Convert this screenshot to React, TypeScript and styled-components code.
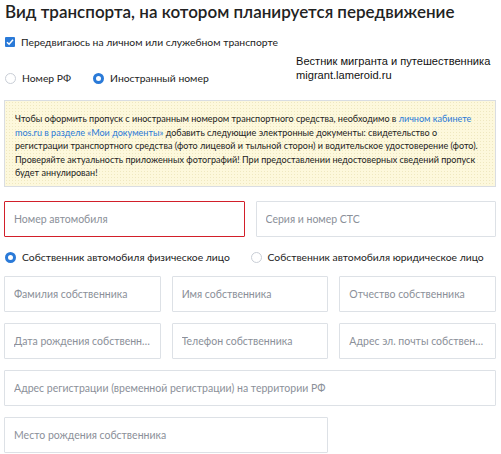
import React from "react";
import styled, { createGlobalStyle } from "styled-components";

const GlobalStyle = createGlobalStyle`
  body {
    margin: 0;
    background: #fff;
    font-family: Lato, "Noto Sans", sans-serif;
    color: #222;
  }
`;

const fields3a = ["Фамилия собственника", "Имя собственника", "Отчество собственника"];
const fields3b = [
  "Дата рождения собственника",
  "Телефон собственника",
  "Адрес эл. почты собственника",
];

const App = () => {
  return (
    <Page>
      <GlobalStyle />
      <Title>Вид транспорта, на котором планируется передвижение</Title>

      <OptionRow $top={10}>
        <Option>
          <CheckBox>
            <svg width="8" height="8" viewBox="0 0 8 8">
              <path d="M1 4.2 L3.1 6.2 L7 1.8" fill="none" stroke="#fff" strokeWidth="1.5" />
            </svg>
          </CheckBox>
          Передвигаюсь на личном или служебном транспорте
        </Option>
      </OptionRow>

      <OptionRow $top={20} $gap={22}>
        <Option>
          <Radio />
          Номер РФ
        </Option>
        <Option>
          <Radio $checked />
          Иностранный номер
        </Option>
      </OptionRow>

      <Watermark>
        Вестник мигранта и путешественника
        <br />
        migrant.lameroid.ru
      </Watermark>

      <Notice>
        Чтобы оформить пропуск с иностранным номером транспортного средства, необходимо в{" "}
        <Link>личном кабинете mos.ru в разделе «Мои документы»</Link> добавить следующие
        электронные документы: свидетельство о регистрации транспортного средства (фото
        лицевой и тыльной сторон) и водительское удостоверение (фото). Проверяйте
        актуальность приложенных фотографий! При предоставлении недостоверных сведений
        пропуск будет аннулирован!
      </Notice>

      <FieldGrid $cols={2} $top={14}>
        <Field $error>
          <Placeholder>Номер автомобиля</Placeholder>
        </Field>
        <Field>
          <Placeholder>Серия и номер СТС</Placeholder>
        </Field>
      </FieldGrid>

      <OptionRow $top={12} $gap={0}>
        <Option $grow>
          <Radio $checked />
          Собственник автомобиля физическое лицо
        </Option>
        <Option $grow>
          <Radio />
          Собственник автомобиля юридическое лицо
        </Option>
      </OptionRow>

      <FieldGrid $cols={3} $top={11}>
        {fields3a.map((f) => (
          <Field key={f}>
            <Placeholder>{f}</Placeholder>
          </Field>
        ))}
      </FieldGrid>
      <FieldGrid $cols={3} $top={11}>
        {fields3b.map((f) => (
          <Field key={f}>
            <Placeholder>{f}</Placeholder>
          </Field>
        ))}
      </FieldGrid>
      <FieldGrid $cols={1} $top={11}>
        <Field>
          <Placeholder>Адрес регистрации (временной регистрации) на территории РФ</Placeholder>
        </Field>
      </FieldGrid>
      <FieldGrid $cols={3} $top={11}>
        <Field $span={2}>
          <Placeholder>Место рождения собственника</Placeholder>
        </Field>
      </FieldGrid>
    </Page>
  );
};

const Page = styled.div`
  position: relative;
  width: 492px;
  padding: 0 5px 0 4px;
`;

const Title = styled.h1`
  margin: 0;
  padding: 1px 0 0 1px;
  height: 23px;
  font-size: 17px;
  font-weight: 600;
  line-height: 22px;
  color: #222;
  white-space: nowrap;
`;

const OptionRow = styled.div<{ $top: number; $gap?: number }>`
  display: flex;
  align-items: center;
  height: 16px;
  margin-top: ${(p) => p.$top}px;
  gap: ${(p) => p.$gap ?? 0}px;
  padding-left: 1px;
`;

const Option = styled.label<{ $grow?: boolean }>`
  display: flex;
  align-items: center;
  gap: 6px;
  font-size: 10.35px;
  color: #222;
  white-space: nowrap;
  ${(p) => (p.$grow ? "flex: 1;" : "")}
`;

const CheckBox = styled.span`
  width: 10px;
  height: 10px;
  border-radius: 1px;
  background: #2a7ad8;
  display: flex;
  align-items: center;
  justify-content: center;
`;

const Radio = styled.span<{ $checked?: boolean }>`
  box-sizing: border-box;
  width: 11px;
  height: 11px;
  border-radius: 50%;
  border: ${(p) => (p.$checked ? "3px solid #2a7ad8" : "1px solid #c9ced6")};
  background: #fff;
`;

const Watermark = styled.div`
  position: absolute;
  left: 296px;
  top: 54px;
  font-family: "Liberation Sans", Arial, sans-serif;
  font-size: 11.1px;
  line-height: 14px;
  color: #111;
  white-space: nowrap;
`;

const Notice = styled.div`
  margin-top: 14px;
  box-sizing: border-box;
  height: 87px;
  padding: 11px 10px 0 10px;
  border: 1px solid #d9dde2;
  background-color: #fdf8dc;
  background-image: radial-gradient(#efe8c0 0.6px, transparent 0.7px);
  background-size: 3px 3px;
  font-size: 9.05px;
  line-height: 13.6px;
  color: #222;
`;

const Link = styled.span`
  color: #2a7ad8;
`;

const FieldGrid = styled.div<{ $cols: number; $top: number }>`
  display: grid;
  grid-template-columns: repeat(${(p) => p.$cols}, minmax(0, 1fr));
  column-gap: 11px;
  margin-top: ${(p) => p.$top}px;
`;

const Field = styled.div<{ $error?: boolean; $span?: number }>`
  box-sizing: border-box;
  height: 36px;
  padding: 0 9px;
  border: 1px solid ${(p) => (p.$error ? "#d21f2a" : "#dde1e6")};
  border-radius: 1px;
  min-width: 0;
  ${(p) => (p.$span ? `grid-column: span ${p.$span};` : "")}
`;

const Placeholder = styled.div`
  line-height: 34px;
  font-size: 10.5px;
  color: #8b9099;
  white-space: nowrap;
  overflow: hidden;
  text-overflow: ellipsis;
`;

export default App;
